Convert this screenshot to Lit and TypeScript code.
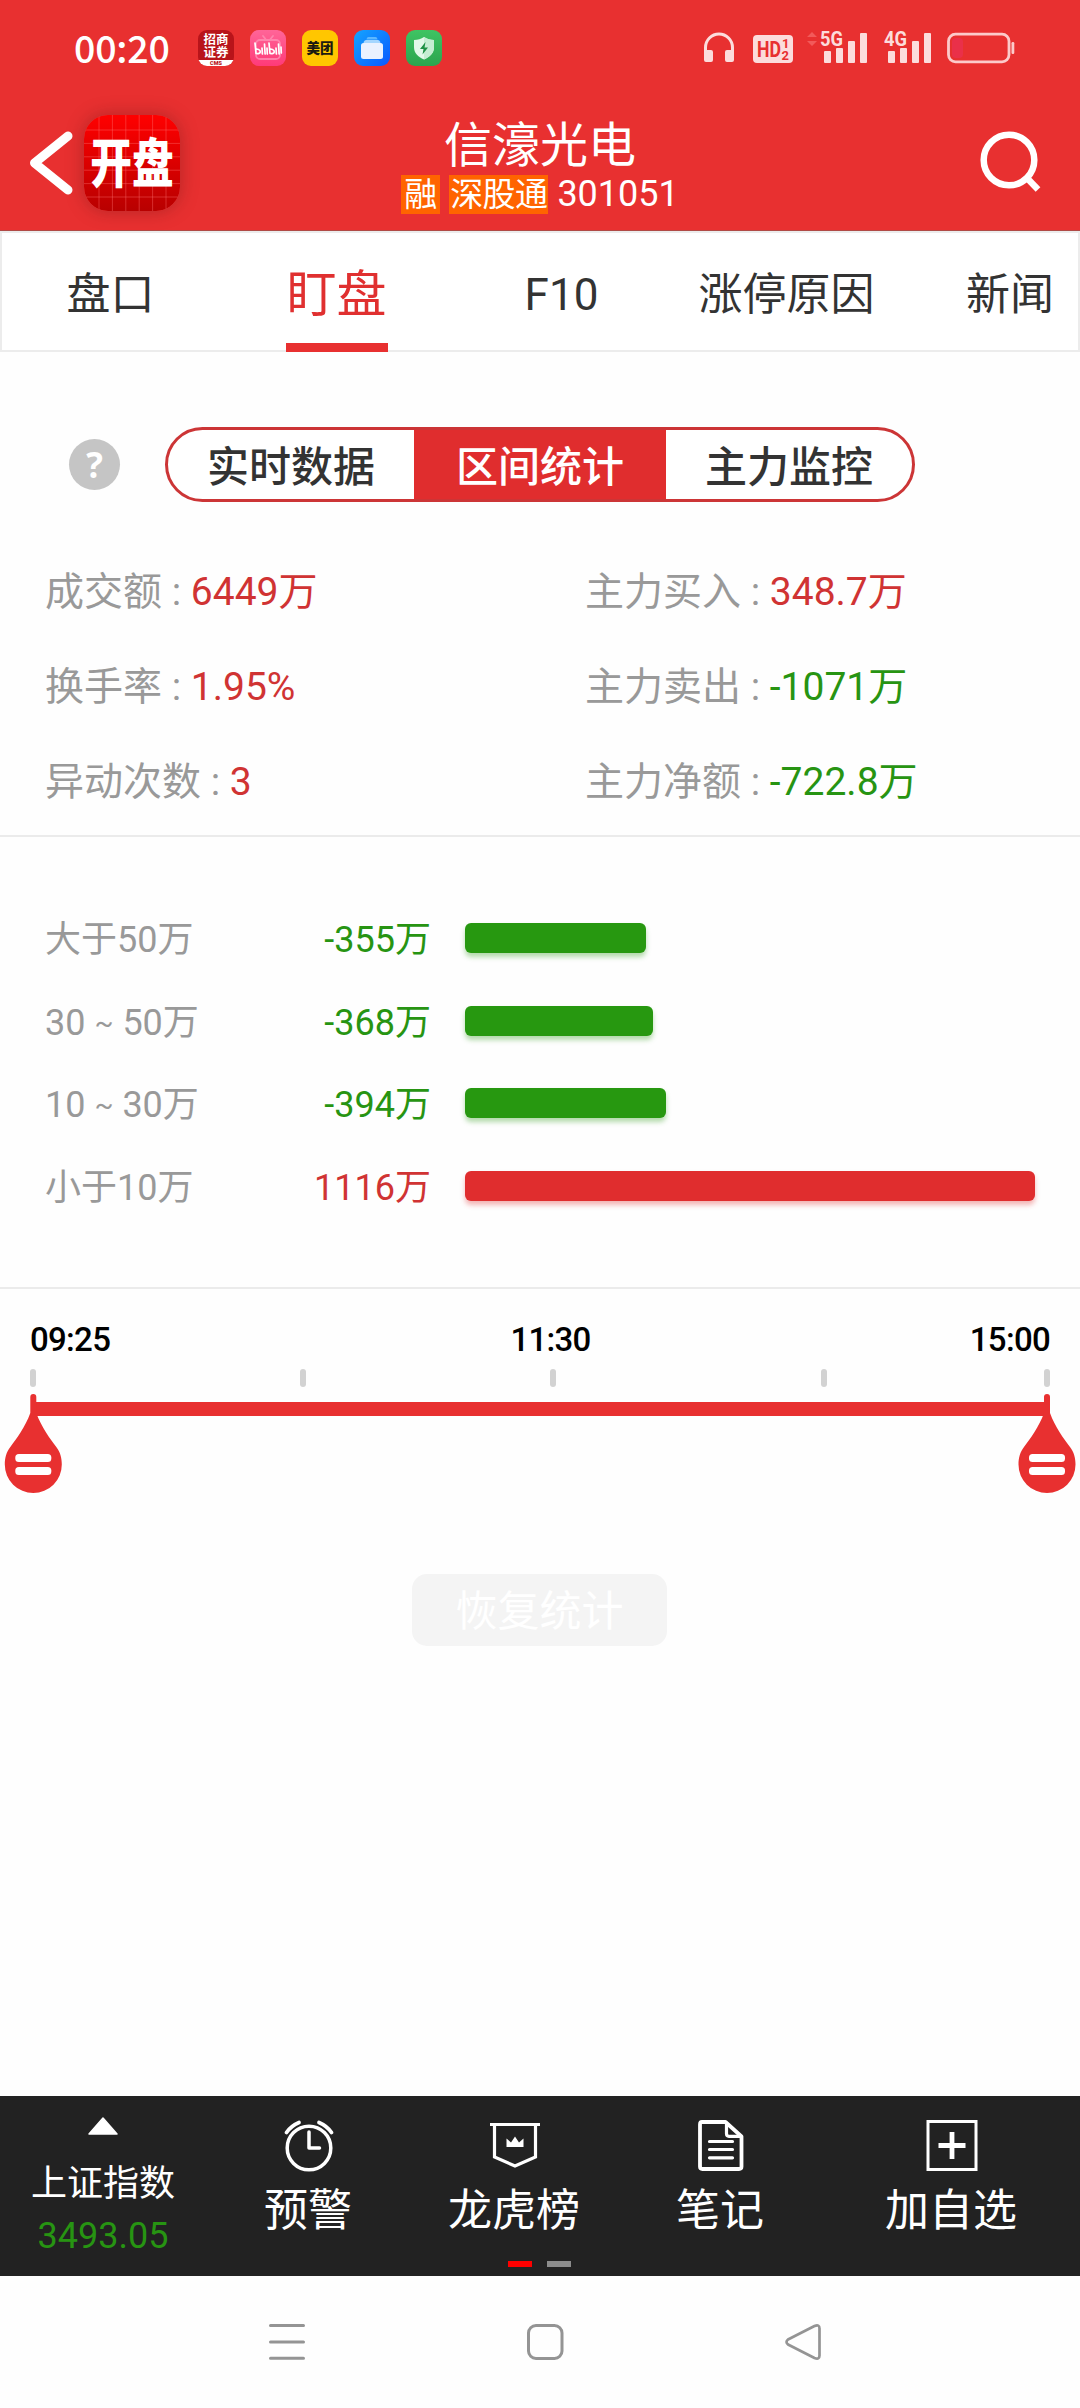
import { LitElement, html, svg, css } from "lit";
import { customElement, state } from "lit/decorators.js";
import { classMap } from "lit/directives/class-map.js";
import { styleMap } from "lit/directives/style-map.js";

interface Stat { label: string; value: string; tone: "up" | "down" }
interface Band { label: string; amount: number }

const TABS = ["盘口", "盯盘", "F10", "涨停原因", "新闻"];
const MODES = ["实时数据", "区间统计", "主力监控"];

const STATS: Stat[] = [
  { label: "成交额", value: "6449万", tone: "up" },
  { label: "主力买入", value: "348.7万", tone: "up" },
  { label: "换手率", value: "1.95%", tone: "up" },
  { label: "主力卖出", value: "-1071万", tone: "down" },
  { label: "异动次数", value: "3", tone: "up" },
  { label: "主力净额", value: "-722.8万", tone: "down" },
];

const BANDS: Band[] = [
  { label: "大于50万", amount: -355 },
  { label: "30 ~ 50万", amount: -368 },
  { label: "10 ~ 30万", amount: -394 },
  { label: "小于10万", amount: 1116 },
];

const signalBars = svg`
  <rect x="4" y="20" width="7" height="12" rx="1" />
  <rect x="16" y="17" width="7" height="15" rx="1" />
  <rect x="28" y="10" width="7" height="22" rx="1" />
  <rect x="40" y="2" width="7" height="30" rx="1" />`;

@customElement("status-bar")
export class StatusBar extends LitElement {
  static styles = css`
    :host {
      display: flex;
      height: 96px;
      padding: 0 65px 0 74px;
      align-items: center;
      box-sizing: border-box;
      color: #fff;
      font-family: Roboto, "Noto Sans CJK SC", sans-serif;
    }
    svg { display: block; flex: none; }
    .clock { width: 124px; font-family: "Noto Sans CJK SC", sans-serif; font-size: 37.5px; font-weight: 500; line-height: 44px; padding-bottom: 2px; letter-spacing: -0.2px; }
    .apps { display: flex; gap: 16px; flex: 1; }
    .system { display: flex; align-items: center; }
    .phones { margin-right: 18px; }
    .hd { margin-right: 13px; }
    .five { margin-right: 16px; }
    .four { margin-right: 15px; }
    .cjk { font-family: "Noto Sans CJK SC", sans-serif; }
  `;

  render() {
    return html`
      <div class="clock">00:20</div>
      <div class="apps">
        <svg width="36" height="36" viewBox="0 0 36 36">
          <defs><clipPath id="c"><rect width="36" height="36" rx="9" /></clipPath></defs>
          <g clip-path="url(#c)">
            <rect width="36" height="36" fill="#b8141a" />
            <rect y="30" width="36" height="6" fill="#fff" />
          </g>
          <g class="cjk" fill="#fff" font-size="12.5" font-weight="700" text-anchor="middle">
            <text x="18" y="13.5">招商</text><text x="18" y="26.5">证券</text>
          </g>
          <text x="18" y="35" fill="#b8141a" font-size="5.5" font-weight="900" text-anchor="middle">CMS</text>
        </svg>
        <svg width="36" height="36" viewBox="0 0 36 36">
          <defs><linearGradient id="p" x2="0" y2="1"><stop stop-color="#ff6598" /><stop offset="1" stop-color="#ff3a78" /></linearGradient></defs>
          <rect width="36" height="36" rx="9" fill="url(#p)" />
          <g fill="none" stroke="#ff8fb5" stroke-width="1.8" stroke-linecap="round" opacity=".8">
            <rect x="6" y="10" width="24" height="19" rx="4" /><path d="M13 6l2.500 3M23 6l-2.500 3" />
          </g>
          <g fill="none" stroke="#fff" stroke-width="1.700" stroke-linecap="round" stroke-linejoin="round">
            <path d="M5 13l1 10.500c5 1 6-3.500.5-4.500M12 18l.4 6M14.500 14l.6 10M17 18l.3 6" />
            <path d="M19 13l1 10.500c5 1 6-3.500.5-4.500M26 18l.4 6M28.500 14l.6 10M31 17l.3 6" />
          </g>
        </svg>
        <svg width="36" height="36" viewBox="0 0 36 36">
          <rect width="36" height="36" rx="9" fill="#ffc600" />
          <text class="cjk" x="18" y="23" fill="#1c1a10" font-size="13.5" font-weight="900" text-anchor="middle">美团</text>
        </svg>
        <svg width="36" height="36" viewBox="0 0 36 36">
          <defs><linearGradient id="b" x2="1" y2="1"><stop stop-color="#14a4ff" /><stop offset="1" stop-color="#0a58ff" /></linearGradient></defs>
          <rect width="36" height="36" rx="9" fill="url(#b)" />
          <path d="M13 8q.4-1 1.500-1h7q1.100 0 1.500 1l.6 1.500h-11.200z" fill="#5cb7ff" />
          <path d="M10 11.500q.5-1.500 2-1.500h12q1.500 0 2 1.500l.5 1.500h-17z" fill="#a5d6ff" />
          <rect x="7" y="13" width="22" height="16" rx="2.500" fill="#eaf1ff" />
        </svg>
        <svg width="36" height="36" viewBox="0 0 36 36">
          <defs><linearGradient id="g" x2="0" y2="1"><stop stop-color="#3fc463" /><stop offset="1" stop-color="#2ba44e" /></linearGradient></defs>
          <rect width="36" height="36" rx="9" fill="url(#g)" />
          <path d="M18 7c3 2 6 3 10 3v7c0 6-4 10-10 12.500C12 27 8 23 8 17v-7c4 0 7-1 10-3z" fill="#e2f8e9" />
          <path d="M18 7c3 2 6 3 10 3v7c0 6-4 10-10 12.500z" fill="#c5edd2" />
          <path d="M19.500 12l-5.500 7h3.500l-1 5.500 5.500-7h-3.500z" fill="#1f9145" />
        </svg>
      </div>
      <div class="system">
        <svg class="phones" width="32" height="32" viewBox="0 0 32 32">
          <path d="M2.500 20v-4.500a13.500 13.500 0 0 1 27 0v4.500" fill="none" stroke="#fcdcdc" stroke-width="3" />
          <path d="M1 18h7q2 0 2 2v8q0 2-2 2H3q-2 0-2-2zM31 18h-7q-2 0-2 2v8q0 2 2 2h5q2 0 2-2z" fill="#fcdcdc" />
        </svg>
        <svg class="hd" width="40" height="32" viewBox="0 0 40 32">
          <rect y="3" width="40" height="28" rx="4" fill="#fcdcdc" />
          <g fill="#e83030" font-weight="700">
            <text x="4" y="25" font-size="22" textLength="24" lengthAdjust="spacingAndGlyphs">HD</text>
            <text x="29" y="16" font-size="13">1</text><text x="28.500" y="28" font-size="13">2</text>
          </g>
        </svg>
        <svg class="five" width="62" height="46" viewBox="-14 -6 62 46">
          <path d="M-13 6l5-5 5 5zM-13 10h10l-5 5z" fill="#f25a5a" />
          <g fill="#fcdcdc">${signalBars}<text x="0" y="15" font-size="20" font-weight="700" textLength="23" lengthAdjust="spacingAndGlyphs">5G</text></g>
        </svg>
        <svg class="four" width="48" height="46" viewBox="0 -6 48 46">
          <g fill="#fcdcdc">${signalBars}<text x="0" y="15" font-size="20" font-weight="700" textLength="23" lengthAdjust="spacingAndGlyphs">4G</text></g>
        </svg>
        <svg width="68" height="34" viewBox="0 0 68 34">
          <rect x="1.500" y="3.200" width="60.500" height="27.600" rx="7" fill="none" stroke="#fccaca" stroke-width="2.800" />
          <rect x="5" y="7" width="11" height="20" rx="4" fill="#ea3049" />
          <rect x="64.500" y="11" width="2.800" height="12" rx="1.200" fill="#fccaca" />
        </svg>
      </div>
    `;
  }
}

@customElement("stock-header")
export class StockHeader extends LitElement {
  static styles = css`
    :host {
      display: grid;
      grid-template-columns: 1fr auto 1fr;
      height: 134px;
      padding: 0 38px 0 28px;
      box-sizing: border-box;
      align-items: start;
      color: #fff;
      font-family: Roboto, "Noto Sans CJK SC", sans-serif;
    }
    svg { display: block; }
    .left { display: flex; padding-top: 19px; align-items: center; gap: 8px; }
    .logo { border-radius: 24px; box-shadow: 0 0 18px rgba(80, 20, 20, 0.35); }
    .brand { font-family: "Noto Sans CJK SC", sans-serif; }
    .titles { display: flex; flex-direction: column; align-items: center; padding: 23px 0 0 10px; }
    .name { font-size: 48px; line-height: 54px; height: 56px; }
    .meta { display: flex; align-items: center; height: 39px; gap: 9px; font-size: 33px; }
    .tag { height: 39px; line-height: 39px; background: #ff6400; padding: 0 3px; }
    .tag.wide { padding: 0 1px; letter-spacing: -0.6px; }
    .code { font-size: 36px; line-height: 43px; }
    .right { display: flex; justify-content: flex-end; padding-top: 33px; }
  `;

  render() {
    const cols = [15, 28.4, 41.8, 55.2, 68.6, 82];
    return html`
      <div class="left">
        <svg width="48" height="68" viewBox="0 0 48 68">
          <path d="M40 7L6.500 34 40 61" fill="none" stroke="#fff" stroke-width="9" stroke-linecap="round" stroke-linejoin="round" />
        </svg>
        <svg class="logo" width="96" height="96" viewBox="0 0 96 96">
          <defs>
            <linearGradient id="r" x2="0" y2="1"><stop stop-color="#ff0000" /><stop offset="1" stop-color="#b80000" /></linearGradient>
          </defs>
          <rect width="96" height="96" rx="24" fill="url(#r)" />
          <g stroke="#ff7070" stroke-opacity=".4">
            ${cols.map((v) => svg`<path d="M${v} 0V96M0 ${v}H96" />`)}
          </g>
          <text class="brand" transform="translate(48 68) scale(.97 1.230)" font-size="43" font-weight="900" fill="#fff" text-anchor="middle">开盘</text>
        </svg>
      </div>
      <div class="titles">
        <div class="name">信濠光电</div>
        <div class="meta">
          <span class="tag">融</span><span class="tag wide">深股通</span><span class="code">301051</span>
        </div>
      </div>
      <div class="right">
        <svg width="66" height="66" viewBox="0 0 66 66">
          <circle cx="33" cy="31" r="25.300" fill="none" stroke="#fff" stroke-width="6.500" />
          <path d="M50 48L62 60.500" stroke="#fff" stroke-width="6.500" />
        </svg>
      </div>
    `;
  }
}

@customElement("range-slider")
export class RangeSlider extends LitElement {
  static styles = css`
    :host { display: block; height: 285px; box-sizing: border-box; padding-top: 33px; font-family: Roboto, sans-serif; }
    .times { display: grid; grid-template-columns: 1fr auto 1fr; padding: 0 30px; font-size: 33px; font-weight: 500; line-height: 36px; letter-spacing: -0.7px; color: #000; }
    .times span:nth-child(2) { padding-left: 21px; }
    .times span:last-child { text-align: right; }
    svg { display: block; margin-top: 6px; }
  `;

  render() {
    const handle = (x: number) => svg`
      <g transform="translate(${x} 0)">
        <path d="M-3 33a3 3 0 0 1 6 0V49C8 63 17 75 23 83C27 88 28.500 94 28.500 100.500A28.500 28.500 0 0 1-28.500 100.500C-28.500 94-27 88-23 83C-17 75-8 63-3 49z" fill="#e83030" />
        <rect x="-18" y="90" width="36" height="8" rx="3.500" fill="#fff" />
        <rect x="-18" y="103" width="36" height="8" rx="3.500" fill="#fff" />
      </g>`;
    return html`
      <div class="times"><span>09:25</span><span>11:30</span><span>15:00</span></div>
      <svg width="1080" height="140" viewBox="0 0 1080 140">
        ${[30, 300, 550, 821, 1044].map((x) => svg`<rect x=${x} y="5" width="6" height="18" rx="3" fill="#d2d2d2" />`)}
        <rect x="33" y="38" width="1014" height="14" fill="#e83030" />
        ${handle(33.3)}${handle(1047)}
      </svg>
    `;
  }
}

@customElement("bottom-bar")
export class BottomBar extends LitElement {
  static styles = css`
    :host { display: block; color: #fff; font-family: Roboto, "Noto Sans CJK SC", sans-serif; }
    .bar { display: grid; grid-template-columns: 206px 206px 206px 206px 1fr; height: 180px; background: #222; position: relative; }
    .index, .item { display: flex; flex-direction: column; align-items: center; }
    .index { padding-top: 20px; font-size: 36px; }
    .index-name { margin-top: 26px; line-height: 44px; }
    .index-value { margin-top: 8px; line-height: 44px; color: #279412; }
    .item { padding-top: 22px; font-size: 44px; line-height: 50px; }
    .item span { margin-top: 12px; padding-right: 2px; }
    svg { display: block; flex: none; }
    .pager { position: absolute; left: 508px; bottom: 9px; display: flex; gap: 15px; }
    .dot { width: 24px; height: 6px; background: #8c8c8c; }
    .dot.on { background: #f00; }
    .nav { height: 132px; display: flex; padding-left: 267px; box-sizing: border-box; align-items: center; gap: 218px; background: #fefefe; }
  `;

  render() {
    return html`
      <div class="bar">
        <div class="index">
          <svg width="32" height="20" viewBox="0 0 32 20"><path d="M16 2L30 18H2z" fill="#fff" stroke="#fff" stroke-width="1.500" stroke-linejoin="round" /></svg>
          <div class="index-name">上证指数</div>
          <div class="index-value">3493.05</div>
        </div>
        <div class="item">
          <svg width="54" height="56" viewBox="0 0 54 56" fill="none" stroke="#fff" stroke-linecap="round" stroke-linejoin="round">
            <circle cx="27" cy="30" r="21.800" stroke-width="3.500" />
            <path d="M27 14V30H37.500" stroke-width="3.500" />
            <path d="M4.500 14.500Q9 8 17 4.500M49.500 14.500Q45 8 37 4.500" stroke-width="3.800" />
          </svg>
          <span>预警</span>
        </div>
        <div class="item">
          <svg width="54" height="56" viewBox="0 0 54 56" fill="none" stroke="#fff">
            <path d="M2 6.500H52" stroke-width="3.200" />
            <path d="M6.500 6.500V39L27 48 47.500 39V6.500" stroke-width="3.200" />
            <path d="M18.500 20.500l4.500 4 4-6 4 6 4.500-4V29h-17z" fill="#fff" stroke="none" />
          </svg>
          <span>龙虎榜</span>
        </div>
        <div class="item">
          <svg width="54" height="56" viewBox="0 0 54 56" fill="none" stroke="#fff" stroke-linejoin="round" stroke-linecap="round">
            <path d="M8 4H31.500L47.500 18.500V48.500Q47.500 51 45 51H8.500Q6 51 6 48.500V6.500Q6 4 8 4Z" stroke-width="3.800" />
            <path d="M32.500 5V15.500Q32.500 18.300 35 18.300H46" stroke-width="3.200" />
            <path d="M15.500 23.500H38.500M15.500 31.500H38.500M15.500 39.800H38.500" stroke-width="3.200" />
          </svg>
          <span>笔记</span>
        </div>
        <div class="item">
          <svg width="54" height="56" viewBox="0 0 54 56" fill="none" stroke="#fff">
            <rect x="3" y="3.500" width="48" height="48" stroke-width="3" />
            <path d="M27 14V41M13.500 27.500H40.500" stroke-width="4.800" />
          </svg>
          <span>加自选</span>
        </div>
        <div class="pager"><i class="dot on"></i><i class="dot"></i></div>
      </div>
      <div class="nav">
        <svg width="40" height="40" viewBox="0 0 40 40" stroke="#949494" stroke-width="3" stroke-linecap="round"><path d="M3.500 3.600H36.500M3.500 20H36.500M3.500 36.300H36.500" /></svg>
        <svg width="40" height="40" viewBox="0 0 40 40" fill="none" stroke="#949494" stroke-width="3"><rect x="3.500" y="3.500" width="33.500" height="33" rx="7.500" /></svg>
        <svg width="40" height="40" viewBox="0 0 40 40" fill="none" stroke="#949494" stroke-width="2.700" stroke-linejoin="round"><path d="M31.500 4Q36.500 2 36.500 6.500V33.500Q36.500 38 31.500 36L5 22.500Q2 20 5 17.500Z" /></svg>
      </div>
    `;
  }
}

@customElement("app-root")
export class AppRoot extends LitElement {
  @state() private tab = 1;
  @state() private mode = 1;

  static styles = css`
    :host {
      display: flex;
      flex-direction: column;
      width: 1080px;
      height: 2408px;
      overflow: hidden;
      background: #fefefe;
      color: #333;
      font-family: Roboto, "Noto Sans CJK SC", sans-serif;
    }
    .top { background: #e83030; height: 231px; box-sizing: border-box; border-bottom: 1px solid #b04a46; }
    .tabs {
      display: grid;
      grid-template-columns: 222px repeat(3, 225px) 1fr;
      height: 121px;
      box-sizing: border-box;
      border: 2px solid #ececec;
      background: #fff;
      font-size: 44px;
    }
    .tab { display: flex; justify-content: center; height: 119px; line-height: 124px; white-space: nowrap; }
    .tab:first-child { padding-right: 5px; }
    .tab:last-child { justify-content: flex-start; padding-left: 67px; }
    .tab.active { color: #e03030; font-size: 50px; }
    .tab.active span { height: 110px; width: 102px; text-align: center; border-bottom: 9px solid #e83030; }
    .modes { display: flex; align-items: center; padding: 75px 0 0 69px; }
    .help {
      width: 51px; height: 51px; margin-right: 45px; border-radius: 50%; background: #c5c5c5; color: #fff;
      font-family: "Open Sans", "Noto Sans", sans-serif; font-size: 35px; font-weight: 700; line-height: 51px; text-align: center;
    }
    .segments { display: flex; width: 750px; height: 75px; box-sizing: border-box; border: 3px solid #cc3536; border-radius: 38px; overflow: hidden; background: #fff; }
    .segment { flex: 1; font-size: 42px; font-weight: 500; line-height: 75px; text-align: center; }
    .segment.active { background: #e02d2e; color: #fff; flex: 0 0 252px; }
    .stats { display: grid; grid-template-columns: 540px 1fr; grid-auto-rows: 95px; padding: 43px 0 5px 45px; font-size: 39px; line-height: 95px; border-bottom: 2px solid #ebebeb; }
    .muted { color: #999; white-space: pre; }
    .tilde { font-size: 28px; line-height: 0; vertical-align: 3px; }
    .up { color: #d03333; }
    .down { color: #279412; }
    .bands { display: flex; flex-direction: column; height: 452px; box-sizing: border-box; padding-top: 60px; border-bottom: 2px solid #ebebeb; font-size: 36px; }
    .band { display: grid; grid-template-columns: 200px 186px 570px; height: 82.5px; align-items: center; padding-left: 45px; line-height: 78px; }
    .band > span { padding-top: 4px; }
    .amount { text-align: right; }
    .track { padding-left: 34px; }
    .fill { height: 30px; border-radius: 6px; }
    .fill.up { background: #e02d2e; box-shadow: 0 4px 5px rgba(224, 45, 46, 0.35); }
    .fill.down { background: #279810; box-shadow: 0 4px 5px rgba(39, 152, 16, 0.35); }
    .reset { align-self: center; width: 255px; height: 72px; margin-right: 1px; border-radius: 15px; background: #f4f4f4; color: #fff; font-size: 42px; line-height: 76px; text-align: center; }
    bottom-bar { margin-top: auto; }
  `;

  private bandLabel(label: string) {
    const [low, high] = label.split("~");
    return high === undefined ? label : html`${low}<span class="tilde">~</span>${high}`;
  }

  render() {
    const peak = Math.max(...BANDS.map((b) => Math.abs(b.amount)));
    return html`
      <div class="top"><status-bar></status-bar><stock-header></stock-header></div>
      <div class="tabs">
        ${TABS.map((t, i) => html`<div class=${classMap({ tab: true, active: i === this.tab })} @click=${() => (this.tab = i)}><span>${t}</span></div>`)}
      </div>
      <div class="modes">
        <div class="help">?</div>
        <div class="segments">
          ${MODES.map((m, i) => html`<div class=${classMap({ segment: true, active: i === this.mode })} @click=${() => (this.mode = i)}>${m}</div>`)}
        </div>
      </div>
      <div class="stats">
        ${STATS.map((s) => html`<div><span class="muted">${s.label} : </span><span class=${s.tone}>${s.value}</span></div>`)}
      </div>
      <div class="bands">
        ${BANDS.map((b) => {
          const tone = b.amount < 0 ? "down" : "up";
          return html`<div class="band">
            <span class="muted">${this.bandLabel(b.label)}</span>
            <span class="amount ${tone}">${b.amount}万</span>
            <div class="track"><div class="fill ${tone}" style=${styleMap({ width: `${(Math.abs(b.amount) / peak) * 570}px` })}></div></div>
          </div>`;
        })}
      </div>
      <range-slider></range-slider>
      <div class="reset">恢复统计</div>
      <bottom-bar></bottom-bar>
    `;
  }
}
